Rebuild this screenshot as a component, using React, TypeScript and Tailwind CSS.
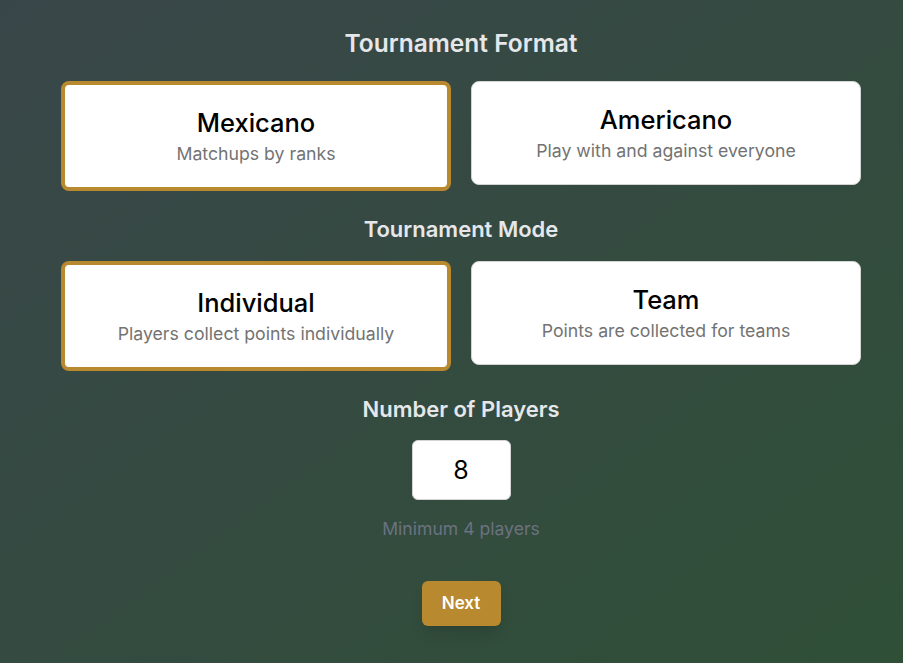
import { useState } from "react";

type Option = { id: string; title: string; desc: string };

const formats: Option[] = [
  { id: "mexicano", title: "Mexicano", desc: "Matchups by ranks" },
  { id: "americano", title: "Americano", desc: "Play with and against everyone" },
];

const modes: Option[] = [
  { id: "individual", title: "Individual", desc: "Players collect points individually" },
  { id: "team", title: "Team", desc: "Points are collected for teams" },
];

function OptionCard({
  opt,
  selected,
  onClick,
}: {
  opt: Option;
  selected: boolean;
  onClick: () => void;
}) {
  return (
    <button
      type="button"
      onClick={onClick}
      className={`w-full rounded-lg bg-white text-center pt-[22px] pb-[21px] ${
        selected ? "border-4 border-[#b8892f]" : "border border-[#d4d4d4]"
      }`}
    >
      <div className="text-[25.5px] leading-8 font-medium text-black">{opt.title}</div>
      <div className="mt-[3px] text-[17.7px] leading-6 text-[#737373]">{opt.desc}</div>
    </button>
  );
}

export default function App() {
  const [format, setFormat] = useState("mexicano");
  const [mode, setMode] = useState("individual");
  const [players, setPlayers] = useState("8");

  return (
    <div
      className="min-h-[663px] w-full bg-gradient-to-br from-[#394649] to-[#2f4f37]"
      style={{ fontFamily: "Inter, 'Noto Sans', sans-serif" }}
    >
      <div className="ml-[61px] w-[800px] pt-[29px] flex flex-col items-center">
        <h2 className="text-[24.5px] leading-7 font-semibold text-[#e5e7eb]">Tournament Format</h2>
        <div className="mt-[24px] grid w-full grid-cols-2 items-start gap-5">
          {formats.map((f) => (
            <OptionCard key={f.id} opt={f} selected={format === f.id} onClick={() => setFormat(f.id)} />
          ))}
        </div>

        <h2 className="mt-[24px] text-[22px] leading-7 font-semibold text-[#e5e7eb]">Tournament Mode</h2>
        <div className="mt-[18px] grid w-full grid-cols-2 items-start gap-5">
          {modes.map((m) => (
            <OptionCard key={m.id} opt={m} selected={mode === m.id} onClick={() => setMode(m.id)} />
          ))}
        </div>

        <h2 className="mt-[24px] text-[22px] leading-7 font-semibold text-[#e5e7eb]">Number of Players</h2>
        <input
          type="text"
          inputMode="numeric"
          value={players}
          onChange={(e) => setPlayers(e.target.value)}
          className="mt-[17px] h-[60px] w-[99px] rounded-md border border-[#d4d4d4] bg-white text-center text-[25px] text-black outline-none"
        />
        <p className="mt-[17px] text-[17.6px] leading-6 text-[#6b7280]">Minimum 4 players</p>

        <button
          type="button"
          className="mt-[40px] h-[45px] w-[79px] rounded-md bg-[#b8892f] text-[17px] font-semibold text-white shadow-lg"
        >
          Next
        </button>
      </div>
    </div>
  );
}
